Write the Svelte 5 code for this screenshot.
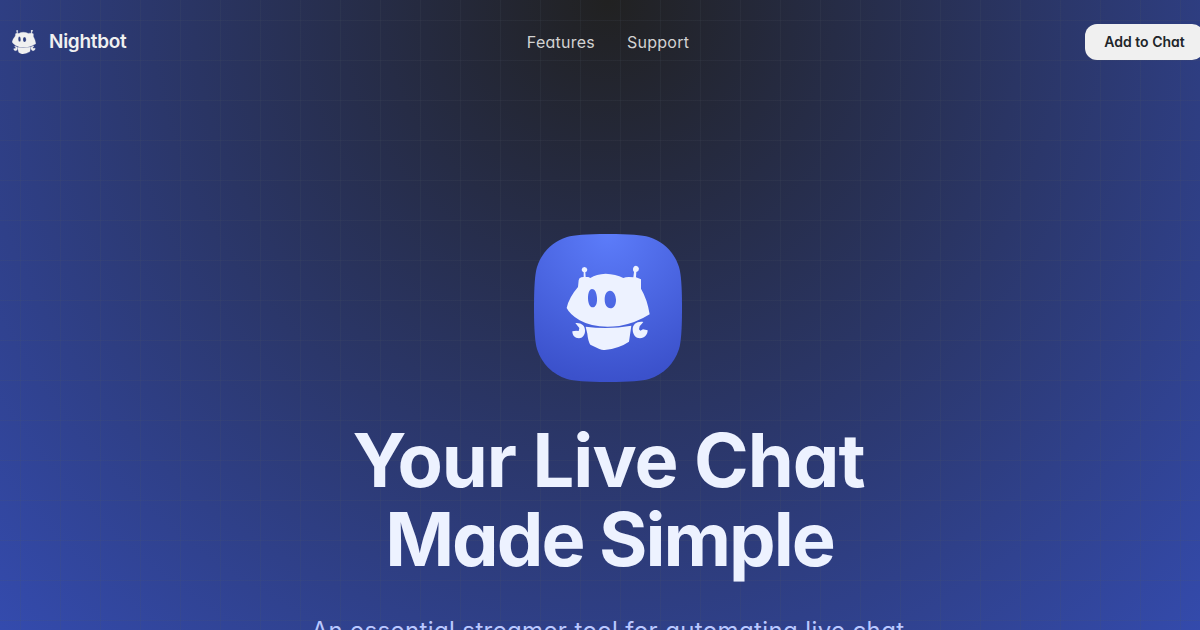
<script lang="ts">
	const links = ['Features', 'Support'];
	const titleLines = [
		{ text: 'Your Live Chat', className: 'first' },
		{ text: 'Made Simple', className: 'second' }
	];
</script>

{#snippet robot(viewBox: string)}
	<svg {viewBox} fill="currentColor" aria-hidden="true">
		<path
			fill-rule="evenodd"
			d="M54 81 L56 61 Q57 54 64 52 L71 51 L71 37 Q65 34 65 29 Q66 21 73 21 Q81 22 82 29 Q81 35 76 37 L77 51 L85 51 L91 54 Q109 42 137 41 Q167 42 190 54 Q200 49 220 52 L222 36 Q218 31 219 26 Q221 17 228 17 Q236 18 237 26 Q237 33 229 36 L228 52 L243 58 L243 86 Q262 118 269 163 Q228 189 178 198 Q105 207 59 181 Q30 164 20 144 Q27 112 54 81 Z M96 87 C88 88 84 99 84 116 C85 132 90 142 98 142 C107 142 112 131 111 114 C110 97 104 87 96 87 Z M150 92 C140 92 134 104 134 118 C134 134 141 145 151 145 C162 145 168 134 168 119 C167 104 161 93 150 92 Z"
		/>
		<path d="M77 200 Q145 210 214 197 L207 245 Q178 265 134 270 Q127 271 118 267 L91 254 Q84 243 82 221 Z" />
		<path d="M46 189 C63 187 75 196 75 211 C76 225 67 235 57 235 C44 235 37 226 37 214 L49 212 L56 213 L58 204 Z" />
		<path d="M250 186 C231 183 218 193 218 208 C218 225 228 235 240 235 C254 234 263 223 263 211 L249 208 L241 212 L237 208 L239 199 Z" />
	</svg>
{/snippet}

<div class="page">
	<header>
		<a class="brand" href="#home">
			{@render robot('20 18 250 252')}
			<span>Nightbot</span>
		</a>
		<nav>
			{#each links as link}
				<a href="#{link.toLowerCase()}">{link}</a>
			{/each}
		</nav>
		<button>Add to Chat</button>
	</header>

	<main>
		<div class="tile">
			<svg class="tile-shape" viewBox="0 0 148 148" aria-hidden="true">
				<defs>
					<radialGradient id="tile-fill" cx="0.5" cy="0" r="1">
						<stop offset="0" stop-color="#5c7cfa" />
						<stop offset="1" stop-color="#3b51cb" />
					</radialGradient>
				</defs>
				<path
					fill="url(#tile-fill)"
					d="M74 0 C96 0 108 1 115 3 C130 8 140 18 145 33 C147 40 148 52 148 74 C148 96 147 108 145 115 C140 130 130 140 115 145 C108 147 96 148 74 148 C52 148 40 147 33 145 C18 140 8 130 3 115 C1 108 0 96 0 74 C0 52 1 40 3 33 C8 18 18 8 33 3 C40 1 52 0 74 0 Z"
				/>
			</svg>
			<div class="tile-robot">{@render robot('0 0 288 288')}</div>
		</div>
		<h1>
			{#each titleLines as line}
				<span class={line.className}>{line.text}</span>
			{/each}
		</h1>
		<p>An essential streamer tool for automating live chat</p>
	</main>
</div>

<style>
	:global(body) {
		overflow: hidden;
	}

	.page {
		width: 1216px;
		height: 630px;
		overflow: hidden;
		font-family: Inter, 'Open Sans', sans-serif;
		font-feature-settings: 'cv11';
		background:
			linear-gradient(rgba(80, 90, 100, 0.14) 1px, transparent 1px) 0 20px / 40px 40px,
			linear-gradient(90deg, rgba(80, 90, 100, 0.14) 1px, transparent 1px) 20px 0 / 40px 40px,
			radial-gradient(circle 876px at 50% 0, #212121, #344bae);
	}

	header {
		display: grid;
		grid-template-columns: 1fr auto 1fr;
		align-items: center;
		height: 84px;
		padding: 0 12px;
		box-sizing: border-box;
	}

	a {
		color: inherit;
		text-decoration: none;
	}

	.brand {
		display: flex;
		align-items: center;
		gap: 13px;
		color: #f0f0f0;
		font-size: 19px;
		font-weight: 600;
		letter-spacing: -0.3px;
		line-height: 24px;
	}

	.brand svg {
		width: 24px;
		height: 24px;
		stroke: currentColor;
		stroke-width: 3px;
	}

	nav {
		display: flex;
		gap: 32px;
		color: #d2d2d2;
		font-size: 16px;
		letter-spacing: 0.25px;
	}

	button {
		justify-self: end;
		width: 119px;
		height: 36px;
		padding: 0 0 2px;
		border: 0;
		border-radius: 12px;
		background: #f0f0f0;
		color: #212529;
		font: inherit;
		font-feature-settings: inherit;
		font-size: 14px;
		font-weight: 600;
	}

	main {
		display: flex;
		flex-direction: column;
		align-items: center;
		padding-top: 150px;
	}

	.tile {
		display: grid;
		width: 148px;
		height: 148px;
		place-items: center;
		color: #edf2ff;
	}

	.tile-shape,
	.tile-robot {
		grid-area: 1 / 1;
	}

	.tile-robot,
	.tile-robot svg {
		width: 96px;
		height: 96px;
	}

	h1 {
		margin: 39px 0 0;
		color: #edf2ff;
		font-size: 74px;
		font-weight: 650;
		line-height: 79px;
		text-align: center;
	}

	h1 span {
		display: block;
	}

	.first {
		padding-left: 1px;
		letter-spacing: -1px;
	}

	.second {
		padding-left: 3px;
		letter-spacing: -2px;
	}

	p {
		margin: 36px 0 0;
		color: #bac8ff;
		font-size: 24px;
		letter-spacing: 0.38px;
		line-height: 32px;
		white-space: nowrap;
	}
</style>
